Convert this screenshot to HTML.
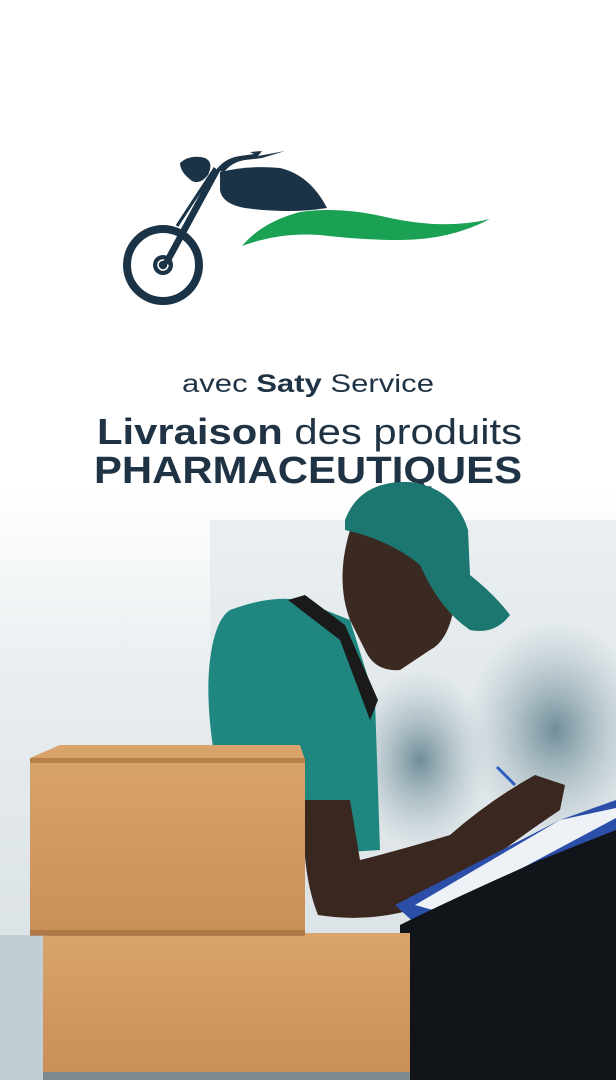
<!DOCTYPE html>
<html><head><meta charset="utf-8"><style>
html,body{margin:0;padding:0;}
body{width:616px;height:1080px;overflow:hidden;position:relative;background:#fff;font-family:"Liberation Sans",sans-serif;}
</style></head><body>
<svg width="616" height="1080" viewBox="0 0 616 1080" style="position:absolute;left:0;top:0">
<defs>
<linearGradient id="bg" x1="0" y1="0" x2="0" y2="1">
<stop offset="0" stop-color="#ffffff"/>
<stop offset="0.45" stop-color="#ffffff"/>
<stop offset="0.62" stop-color="#e9eef0"/>
<stop offset="1" stop-color="#d5dde1"/>
</linearGradient>
<radialGradient id="tree" cx="0.5" cy="0.5" r="0.5">
<stop offset="0" stop-color="#6f8d98"/>
<stop offset="1" stop-color="#a9bcc3" stop-opacity="0"/>
</radialGradient>
<linearGradient id="box" x1="0" y1="0" x2="0" y2="1">
<stop offset="0" stop-color="#d9a46c"/><stop offset="1" stop-color="#c98f57"/>
</linearGradient>
</defs>
<rect width="616" height="1080" fill="url(#bg)"/>
<rect x="210" y="520" width="406" height="360" fill="#dfe6e9" opacity="0.6"/>
<ellipse cx="555" cy="730" rx="90" ry="110" fill="url(#tree)"/>
<ellipse cx="420" cy="760" rx="70" ry="90" fill="url(#tree)"/>
<rect x="0" y="935" width="45" height="145" fill="#c3ced2"/>
<!-- logo -->
<circle cx="163" cy="265" r="36" fill="none" stroke="#1b3346" stroke-width="8"/>
<circle cx="163" cy="265" r="10" fill="#1b3346"/>
<circle cx="163" cy="265" r="5" fill="none" stroke="#fff" stroke-width="1.5"/>
<path d="M163 262 L214 168 L220 171 L169 265 Z" fill="#1b3346"/>
<path d="M177 226 L215 168" stroke="#1b3346" stroke-width="3"/>
<path d="M180 163 Q190 154 205 158 Q214 162 208 175 Q200 185 192 181 Q180 172 180 163Z" fill="#1b3346"/>
<path d="M216 170 Q225 158 240 156 L254 154 L250 152 L262 151 L258 156 L285 151 L262 158 L245 160 Q232 162 224 172Z" fill="#1b3346"/>
<path d="M220 172 Q250 165 280 168 Q310 175 327 208 Q290 214 245 208 Q222 204 220 190Z" fill="#1b3346"/>
<path d="M242 246 Q262 222 300 212 Q340 206 390 218 Q445 230 490 219 Q450 240 400 240 Q360 240 320 235 Q280 232 242 246Z" fill="#1aa153"/>
<!-- text -->
<text x="182" y="392" textLength="252" lengthAdjust="spacingAndGlyphs" font-size="25" fill="#1f3344" font-family="Liberation Sans, sans-serif">avec <tspan font-weight="bold">Saty</tspan> Service</text>
<text x="97" y="444" textLength="425" lengthAdjust="spacingAndGlyphs" font-size="36" fill="#1f3344" font-family="Liberation Sans, sans-serif"><tspan font-weight="bold">Livraison</tspan> des produits</text>
<text x="94" y="483" textLength="428" lengthAdjust="spacingAndGlyphs" font-size="38" font-weight="bold" fill="#1f3344" font-family="Liberation Sans, sans-serif">PHARMACEUTIQUES</text>
<!-- man -->
<path d="M230 610 Q270 595 300 600 L350 620 L375 700 L380 850 L300 855 L300 800 L215 760 Q205 700 210 660 Q215 620 230 610Z" fill="#1f8780"/>
<path d="M288 600 L305 595 L345 625 L378 700 L370 720 L340 640Z" fill="#1a1a1a"/>
<path d="M350 530 Q380 510 420 525 Q455 545 455 600 Q450 640 430 650 L400 670 Q375 672 365 650 L350 620 Q335 580 350 530Z" fill="#3b2a22"/>
<path d="M345 520 Q360 480 410 482 Q455 488 468 530 L470 575 Q495 595 510 615 Q495 635 470 630 Q440 610 420 565 Q390 540 345 530Z" fill="#1c7770"/>
<path d="M305 800 Q300 870 318 915 Q380 925 440 900 Q500 850 560 810 L565 785 L535 775 Q490 800 450 835 Q400 850 360 860 L350 800Z" fill="#3a271f"/>
<path d="M395 905 L560 820 L616 800 L616 830 L420 928 Z" fill="#2b4fa8"/>
<path d="M415 905 L560 820 L616 808 L616 818 L440 912Z" fill="#eef2f7"/>
<path d="M400 925 Q450 900 540 860 L616 830 L616 1080 L400 1080Z" fill="#111418"/>
<path d="M497 767 L515 785" stroke="#2d5cc4" stroke-width="3"/>
<!-- boxes -->
<rect x="43" y="933" width="367" height="142" fill="url(#box)"/>
<path d="M30 758 L60 745 L300 745 L305 760 L305 935 L30 935Z" fill="url(#box)"/>
<rect x="30" y="758" width="275" height="5" fill="#b9804a"/>
<rect x="30" y="930" width="275" height="6" fill="#9c6a3c" opacity="0.6"/>
<rect x="43" y="1072" width="367" height="8" fill="#7d8a90"/>
</svg>
</body></html>
